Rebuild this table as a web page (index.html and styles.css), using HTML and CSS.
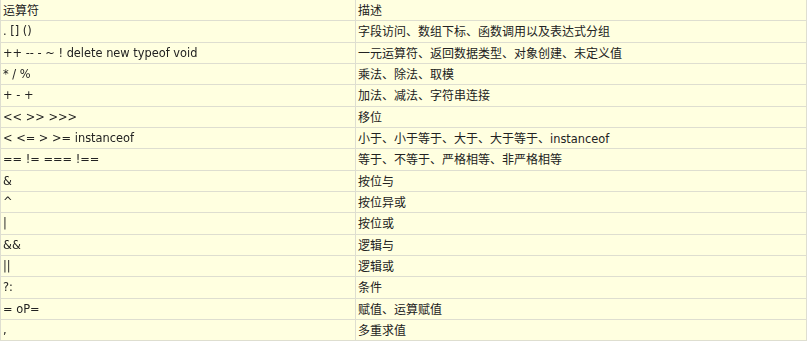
FILE: index.html
```html
<!DOCTYPE html>
<html>
<head>
<meta charset="utf-8">
<link rel="stylesheet" href="styles.css">
</head>
<body>
<table class="ops">
<tr><td class="c1 cjk">运算符</td><td class="c2">描述</td></tr>
<tr><td class="c1"><span class="op">. [] ()</span></td><td class="c2">字段访问、数组下标、函数调用以及表达式分组</td></tr>
<tr><td class="c1"><span class="op">++ -- - ~ ! delete new typeof void</span></td><td class="c2">一元运算符、返回数据类型、对象创建、未定义值</td></tr>
<tr><td class="c1"><span class="op">* / %</span></td><td class="c2">乘法、除法、取模</td></tr>
<tr><td class="c1"><span class="op">+ - +</span></td><td class="c2">加法、减法、字符串连接</td></tr>
<tr><td class="c1"><span class="op">&lt;&lt; &gt;&gt; &gt;&gt;&gt;</span></td><td class="c2">移位</td></tr>
<tr><td class="c1"><span class="op">&lt; &lt;= &gt; &gt;= instanceof</span></td><td class="c2">小于、小于等于、大于、大于等于、<span class="lat">instanceof</span></td></tr>
<tr><td class="c1"><span class="op">== != === !==</span></td><td class="c2">等于、不等于、严格相等、非严格相等</td></tr>
<tr><td class="c1"><span class="op">&amp;</span></td><td class="c2">按位与</td></tr>
<tr><td class="c1"><span class="op">^</span></td><td class="c2">按位异或</td></tr>
<tr><td class="c1"><span class="op">|</span></td><td class="c2">按位或</td></tr>
<tr><td class="c1"><span class="op">&amp;&amp;</span></td><td class="c2">逻辑与</td></tr>
<tr><td class="c1"><span class="op">||</span></td><td class="c2">逻辑或</td></tr>
<tr><td class="c1"><span class="op">?:</span></td><td class="c2">条件</td></tr>
<tr><td class="c1"><span class="op">= oP=</span></td><td class="c2">赋值、运算赋值</td></tr>
<tr><td class="c1"><span class="op">,</span></td><td class="c2">多重求值</td></tr>
</table>
</body>
</html>
```
FILE: styles.css
```css
html, body {
  margin: 0;
  padding: 0;
  background: #ffffff;
}
.ops {
  border-collapse: collapse;
  width: 807px;
  margin: -1px 0 0 0;
  background: #ffffe0;
  font-family: "DejaVu Sans", "Noto Sans CJK SC", sans-serif;
  font-size: 11.4px;
  color: #222222;
  table-layout: fixed;
}
.ops td {
  border: 1px solid #deded0;
  height: 21.34px;
  padding: 0 0 0 2px;
  line-height: 14px;
  vertical-align: middle;
  white-space: nowrap;
  box-sizing: border-box;
}
.ops .c1 {
  width: 355px;
}
.ops .op {
  display: inline-block;
  filter: grayscale(1);
}
.ops .c2 {
  font-family: "Noto Sans CJK SC", sans-serif;
  font-size: 12px;
}
.ops .cjk {
  font-family: "Noto Sans CJK SC", sans-serif;
  font-size: 12px;
}
.ops .lat {
  font-family: "DejaVu Sans", sans-serif;
  font-size: 11.4px;
}
```
